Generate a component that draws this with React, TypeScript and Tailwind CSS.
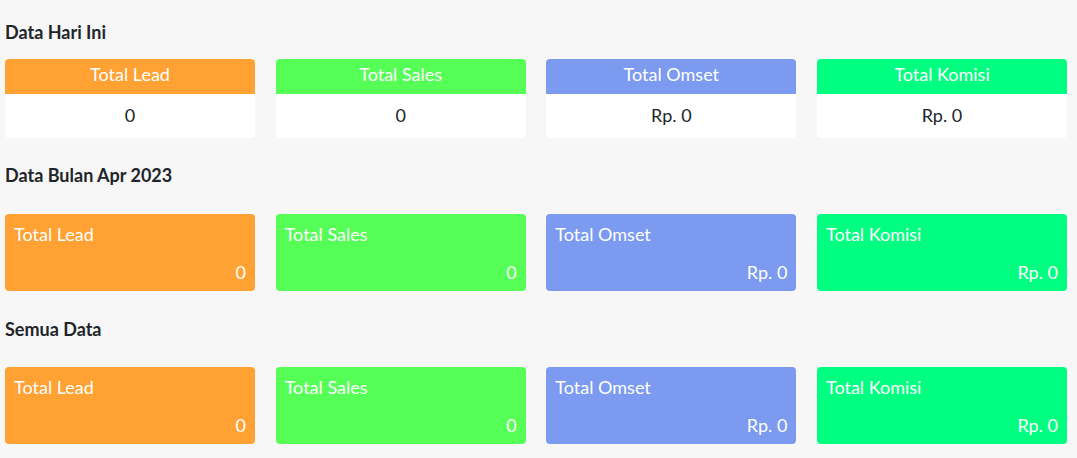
const cards = [
  { label: 'Total Lead', value: '0', color: 'bg-[#ffa133]' },
  { label: 'Total Sales', value: '0', color: 'bg-[#55ff55]' },
  { label: 'Total Omset', value: 'Rp. 0', color: 'bg-[#7b9af0]' },
  { label: 'Total Komisi', value: 'Rp. 0', color: 'bg-[#00ff80]' },
]

function TodayCard({ label, value, color }: { label: string; value: string; color: string }) {
  return (
    <div className="overflow-hidden rounded bg-white">
      <div className={`flex h-[35px] justify-center pt-[3px] text-[18px] leading-6 text-white ${color}`}>
        {label}
      </div>
      <div className="flex h-[44px] items-center justify-center pb-[2px] text-[18px] leading-6 text-[#212529]">
        {value}
      </div>
    </div>
  )
}

function SummaryCard({ label, value, color }: { label: string; value: string; color: string }) {
  return (
    <div className={`flex h-[77px] flex-col justify-between rounded pb-[7px] pl-[9px] pr-[9px] pt-[8px] text-[18px] leading-6 text-white ${color}`}>
      <div>{label}</div>
      <div className="text-right">{value}</div>
    </div>
  )
}

export default function App() {
  return (
    <div className="min-h-screen bg-[#f7f7f7] pl-[5px] pt-[20px] font-['Lato',sans-serif]">
      <div className="w-[1062px]">
        {/* HARI INI */}
        <h2 className="text-[18px] font-bold leading-6 text-[#212529]">Data Hari Ini</h2>
        <div className="mt-[15px] grid grid-cols-4 gap-[20.67px]">
          {cards.map((c) => (
            <TodayCard key={c.label} {...c} />
          ))}
        </div>

        {/* BULAN INI */}
        <h2 className="mt-[25px] text-[18px] font-bold leading-6 text-[#212529]">Data Bulan Apr 2023</h2>
        <div className="mt-[27px] grid grid-cols-4 gap-[20.67px]">
          {cards.map((c) => (
            <SummaryCard key={c.label} {...c} />
          ))}
        </div>

        {/* SEMUA */}
        <h2 className="mt-[26px] text-[18px] font-bold leading-6 text-[#212529]">Semua Data</h2>
        <div className="mt-[26px] grid grid-cols-4 gap-[20.67px]">
          {cards.map((c) => (
            <SummaryCard key={c.label} {...c} />
          ))}
        </div>
      </div>
    </div>
  )
}
